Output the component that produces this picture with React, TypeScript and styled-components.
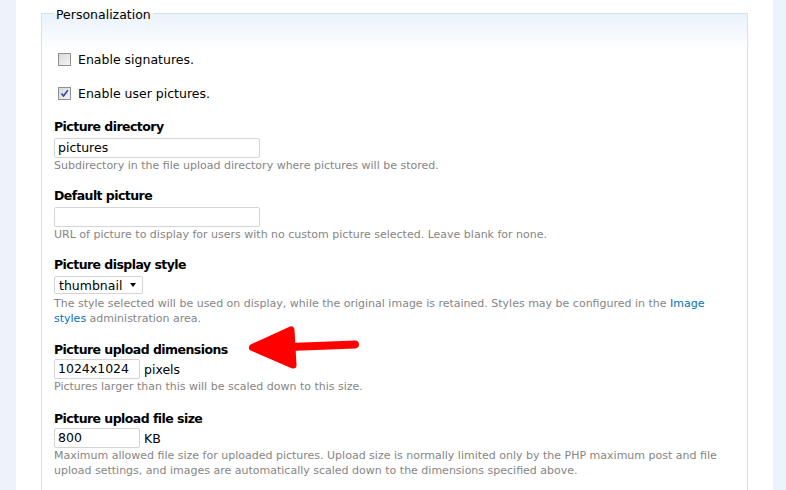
import React from "react";
import styled, { createGlobalStyle } from "styled-components";

const Global = createGlobalStyle`
  html, body { margin: 0; padding: 0; background: #fff; }
  body { font-family: "DejaVu Sans", Verdana, sans-serif; color: #000; }
`;

const Page = styled.div`
  position: relative;
  display: flex;
  width: 786px;
  height: 490px;
  overflow: hidden;
`;

const SideStrip = styled.div<{ $w: number }>`
  width: ${(p) => p.$w}px;
  flex: none;
  background: #edf3fb;
`;

const Main = styled.div`
  flex: 1;
  padding: 3px 25px 0 25px;
  min-width: 0;
`;

const Fieldset = styled.fieldset`
  margin: 0;
  padding: 28px 12px 40px 12px;
  border: 1px solid #d3e2ec;
  min-height: 600px;
  background: linear-gradient(#eaf2fb 0px, #ffffff 36px);
`;

const Legend = styled.legend`
  padding: 4px 2px 0;
  font-size: 12.5px;
  line-height: 16px;
  color: #000;
`;

const CheckRow = styled.label`
  display: flex;
  align-items: center;
  gap: 7px;
  height: 16px;
  margin: 0 0 18px 4px;
  font-size: 12.5px;
`;

const Box = styled.span`
  width: 11px;
  height: 11px;
  flex: none;
  border: 1px solid #8f8f8f;
  background: linear-gradient(135deg, #d9d9d9, #f4f4f4);
  display: flex;
  align-items: center;
  justify-content: center;
`;

const Item = styled.div<{ $gap?: number }>`
  margin-bottom: ${(p) => p.$gap ?? 15}px;
`;

const Label = styled.div`
  font-size: 12.5px;
  font-weight: bold;
  letter-spacing: -0.55px;
  line-height: 16px;
  margin-bottom: 3px;
`;

const Row = styled.div`
  display: flex;
  align-items: center;
  gap: 4px;
  font-size: 12.5px;
  margin-top: -2px;
`;

const TextInput = styled.div<{ $w: number }>`
  box-sizing: border-box;
  width: ${(p) => p.$w}px;
  height: 20px;
  border: 1px solid #d4d4d4;
  border-radius: 2px;
  padding: 0 4px 0 3px;
  font-size: 12.5px;
  line-height: 18px;
`;

const Select = styled.div`
  box-sizing: border-box;
  width: 89px;
  height: 18px;
  border: 1px solid #d4d4d4;
  border-radius: 2px;
  padding: 0 4px;
  display: flex;
  align-items: center;
  justify-content: space-between;
  font-size: 12.5px;
  margin: 1px 0 2px;
`;

const Caret = styled.span`
  width: 0;
  height: 0;
  border-left: 3.5px solid transparent;
  border-right: 3.5px solid transparent;
  border-top: 4px solid #000;
  margin-right: 2px;
`;

const Desc = styled.div`
  font-size: 11px;
  line-height: 15px;
  color: #858585;
`;

const Link = styled.a`
  color: #0074bd;
  text-decoration: none;
`;

const Arrow = styled.svg`
  position: absolute;
  left: 240px;
  top: 320px;
`;

const Check = () => (
  <svg width="9" height="9" viewBox="0 0 9 9">
    <path d="M1.5 4.5 L3.5 7 L7.8 1.2" fill="none" stroke="#3443a8" strokeWidth="1.6" />
  </svg>
);

export default function App() {
  return (
    <Page>
      <Global />
      <SideStrip $w={16} />
      <Main>
        <Fieldset>
          <Legend>Personalization</Legend>
          <CheckRow>
            <Box />
            Enable signatures.
          </CheckRow>
          <CheckRow>
            <Box>
              <Check />
            </Box>
            Enable user pictures.
          </CheckRow>
          <Item>
            <Label>Picture directory</Label>
            <TextInput $w={206}>pictures</TextInput>
            <Desc>Subdirectory in the file upload directory where pictures will be stored.</Desc>
          </Item>
          <Item>
            <Label>Default picture</Label>
            <TextInput $w={206} />
            <Desc>URL of picture to display for users with no custom picture selected. Leave blank for none.</Desc>
          </Item>
          <Item $gap={16}>
            <Label>Picture display style</Label>
            <Select>
              thumbnail
              <Caret />
            </Select>
            <Desc>
              The style selected will be used on display, while the original image is retained. Styles may be
              configured in the <Link href="#">Image styles</Link> administration area.
            </Desc>
          </Item>
          <Item $gap={17}>
            <Label>Picture upload dimensions</Label>
            <Row>
              <TextInput $w={86}>1024x1024</TextInput>
              pixels
            </Row>
            <Desc>Pictures larger than this will be scaled down to this size.</Desc>
          </Item>
          <Item>
            <Label>Picture upload file size</Label>
            <Row>
              <TextInput $w={86}>800</TextInput>
              KB
            </Row>
            <Desc>
              Maximum allowed file size for uploaded pictures. Upload size is normally limited only by the PHP
              maximum post and file upload settings, and images are automatically scaled down to the dimensions
              specified above.
            </Desc>
          </Item>
        </Fieldset>
      </Main>
      <SideStrip $w={13} />
      <Arrow width="130" height="55" viewBox="0 0 130 55">
        <line x1="50" y1="27" x2="115" y2="24.5" stroke="#ff0000" strokeWidth="8" strokeLinecap="round" />
        <polygon
          points="12.5,27.5 51,10 53,45"
          fill="#ff0000"
          stroke="#ff0000"
          strokeWidth="7"
          strokeLinejoin="round"
        />
      </Arrow>
    </Page>
  );
}
